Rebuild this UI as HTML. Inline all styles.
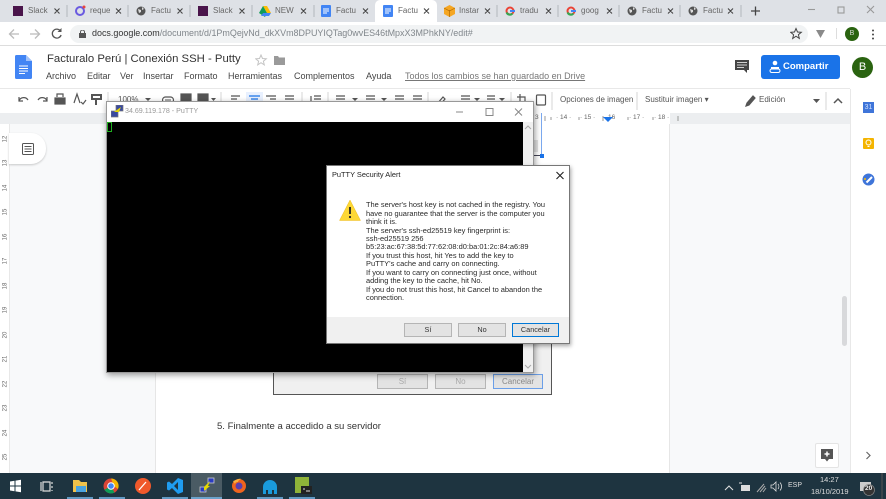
<!DOCTYPE html>
<html><head><meta charset="utf-8"><style>
html,body{margin:0;padding:0;width:886px;height:499px;overflow:hidden;background:#fff;font-family:"Liberation Sans",sans-serif}
div,span,svg{position:absolute;display:block}
#w{left:0;top:0;width:886px;height:499px;overflow:hidden;filter:blur(.35px)}
.t{white-space:nowrap;line-height:1}
.tab{top:7px;font-size:8px;color:#666;width:20px;overflow:hidden;white-space:nowrap;line-height:1}
.m{top:72px;font-size:9px;color:#444;white-space:nowrap;line-height:1}
.b{background:#e3e3e3;border:1px solid #b5b5b5;box-sizing:border-box;font-size:7.300px;color:#333;text-align:center;line-height:12px}
.d{left:366px;font-size:7.450px;color:#2a2a2a;white-space:nowrap;line-height:1}
.r{left:2px;font-size:6px;color:#666;transform:rotate(-90deg);white-space:nowrap;line-height:1}
.u{top:115px;font-size:6.500px;color:#666;white-space:nowrap;line-height:1}
</style></head><body><div id="w">
<!-- tab strip -->
<div style="left:0;top:0;width:886px;height:22px;background:#dee1e6"></div>
<div style="left:375px;top:0;width:62px;height:22px;background:#fff;border-radius:5px 5px 0 0"></div>
<!-- tab icons -->
<div style="left:13px;top:6px;width:10px;height:10px;background:#4a154b"></div>
<div style="left:198px;top:6px;width:10px;height:10px;background:#4a154b"></div>
<svg style="left:74px;top:5px" width="12" height="12"><circle cx="6" cy="6" r="4" fill="none" stroke="#6a5ae0" stroke-width="2"/><circle cx="10" cy="2" r="1.500" fill="#e8453c"/></svg>
<svg style="left:136px;top:6px" width="10" height="10"><circle cx="5" cy="5" r="4.500" fill="#555"/><path d="M2 3l3 1 0 2-2 1zM6 1l2 2-2 1z" fill="#ddd"/></svg>
<svg style="left:627px;top:6px" width="10" height="10"><circle cx="5" cy="5" r="4.500" fill="#555"/><path d="M2 3l3 1 0 2-2 1zM6 1l2 2-2 1z" fill="#ddd"/></svg>
<svg style="left:688px;top:6px" width="10" height="10"><circle cx="5" cy="5" r="4.500" fill="#555"/><path d="M2 3l3 1 0 2-2 1zM6 1l2 2-2 1z" fill="#ddd"/></svg>
<svg style="left:259px;top:6px" width="12" height="11"><path d="M4 0h4l4 7H8z" fill="#fbbc04"/><path d="M4 0l4 7-2 4-6-4z" fill="#0f9d58"/><path d="M2 10l2-3h8l-2 3z" fill="#4285f4"/></svg>
<svg style="left:321px;top:5px" width="10" height="12"><rect width="10" height="12" rx="1" fill="#4285f4"/><path d="M2 4h6M2 6h6M2 8h4" stroke="#fff"/></svg>
<svg style="left:383px;top:5px" width="10" height="12"><rect width="10" height="12" rx="1" fill="#4285f4"/><path d="M2 4h6M2 6h6M2 8h4" stroke="#fff"/></svg>
<svg style="left:444px;top:5px" width="11" height="12"><path d="M5.500 0L11 3v6l-5.500 3L0 9V3z" fill="#f5a623"/><path d="M5.500 5v7M0 3l5.500 3L11 3" stroke="#b26a00" fill="none" stroke-width=".7"/></svg>
<svg style="left:505px;top:6px" width="10" height="10"><circle cx="5" cy="5" r="3.500" fill="none" stroke="#ea4335" stroke-width="2"/><path d="M5 5h5" stroke="#4285f4" stroke-width="2"/><path d="M1.600 6.500A3.500 3.500 0 0 0 7.500 7.500" fill="none" stroke="#34a853" stroke-width="2"/></svg>
<svg style="left:566px;top:6px" width="10" height="10"><circle cx="5" cy="5" r="3.500" fill="none" stroke="#ea4335" stroke-width="2"/><path d="M5 5h5" stroke="#4285f4" stroke-width="2"/><path d="M1.600 6.500A3.500 3.500 0 0 0 7.500 7.500" fill="none" stroke="#34a853" stroke-width="2"/></svg>
<!-- tab text -->
<span class="tab" style="left:28px">Slack</span><span class="tab" style="left:90px">reque</span><span class="tab" style="left:151px">Factu</span><span class="tab" style="left:213px">Slack</span><span class="tab" style="left:275px">NEW</span><span class="tab" style="left:336px">Factu</span><span class="tab" style="left:398px">Factu</span><span class="tab" style="left:459px">Instar</span><span class="tab" style="left:520px">tradu</span><span class="tab" style="left:581px">goog</span><span class="tab" style="left:642px">Factu</span><span class="tab" style="left:703px">Factu</span>
<!-- closes -->
<svg style="left:0;top:0" width="886" height="22" stroke="#444" stroke-width="1.100" fill="none"><path d="M54.500 8.500l5 5m0-5l-5 5M116 8.500l5 5m0-5l-5 5M177.500 8.500l5 5m0-5l-5 5M239.500 8.500l5 5m0-5l-5 5M301 8.500l5 5m0-5l-5 5M363 8.500l5 5m0-5l-5 5M424 8.500l5 5m0-5l-5 5M485 8.500l5 5m0-5l-5 5M546 8.500l5 5m0-5l-5 5M607 8.500l5 5m0-5l-5 5M668 8.500l5 5m0-5l-5 5M728 8.500l5 5m0-5l-5 5"/><path d="M67 5v12M128 5v12M190 5v12M252 5v12M314 5v12M497 5v12M558 5v12M619 5v12M680 5v12M741 5v12" stroke="#a8adb2" stroke-width=".8"/><path d="M751 11h9M755.500 6.500v9" stroke="#444" stroke-width="1.300"/><path d="M808 9.500h7" stroke="#999"/><rect x="838" y="7" width="6" height="6" stroke="#999"/><path d="M867 6l7 7m0-7l-7 7" stroke="#999"/></svg>
<!-- omnibox -->
<div style="left:0;top:22px;width:886px;height:23px;background:#fff;border-bottom:1px solid #ddd"></div>
<div style="left:70px;top:25px;width:738px;height:18px;background:#f1f3f4;border-radius:9px"></div>
<svg style="left:8px;top:26px" width="56" height="16" fill="none"><path d="M11 8H2M6 3.500L1.500 8 6 12.500" stroke="#bbb" stroke-width="1.300"/><path d="M22 8h9M27 3.500L31.500 8 27 12.500" stroke="#bbb" stroke-width="1.300"/><path d="M52.500 5a4.500 4.500 0 1 0 .6 4" stroke="#555" stroke-width="1.300"/><path d="M53.500 2v4h-4z" fill="#555"/></svg>
<svg style="left:79px;top:30px" width="7" height="8"><rect y="3" width="7" height="5" fill="#555"/><path d="M1.500 3.500V2a2 2 0 0 1 4 0v1.500" fill="none" stroke="#555"/></svg>
<div class="t" style="left:92px;top:29px;font-size:8.960px;color:#80868b"><span style="position:static;display:inline;color:#333">docs.google.com</span>/document/d/1PmQejvNd_dkXVm8DPUYIQTag0wvES46tMpxX3MPhkNY/edit#</div>
<svg style="left:790px;top:27px" width="46" height="14"><path d="M6 1.500l1.500 3.500 3.800.3-2.900 2.400.9 3.700L6 9.200 2.700 11.500l.9-3.700L.7 5.300l3.800-.3z" fill="none" stroke="#444" stroke-width="1"/><path d="M26 3h9l-4.500 8z" fill="#8a8a8a"/></svg>
<div style="left:836px;top:28px;width:1px;height:11px;background:#ddd"></div>
<div style="left:845px;top:27px;width:14px;height:14px;border-radius:7px;background:#2a6310;color:#ddd;font-size:7px;line-height:14px;text-align:center">B</div>
<svg style="left:871px;top:29px" width="4" height="11" fill="#444"><circle cx="2" cy="1.500" r="1"/><circle cx="2" cy="5.500" r="1"/><circle cx="2" cy="9.500" r="1"/></svg>
<!-- docs header -->
<svg style="left:15px;top:55px" width="17" height="24"><path d="M1.500 0H11l6 6v16.500a1.500 1.500 0 0 1-1.500 1.500h-14A1.500 1.500 0 0 1 0 22.500v-21A1.500 1.500 0 0 1 1.500 0z" fill="#4285f4"/><path d="M11 0l6 6h-6z" fill="#a1c2fa"/><path d="M4 11h9M4 13.500h9M4 16h9M4 18.500h6" stroke="#fff"/></svg>
<div class="t" style="left:47px;top:54px;font-size:11.340px;color:#333">Facturalo Perú | Conexión SSH - Putty</div>
<svg style="left:255px;top:54px" width="50" height="13"><path d="M6 1l1.500 3.500 3.800.3-2.900 2.400.9 3.700L6 8.700 2.700 10.900l.9-3.700L.7 4.800l3.800-.3z" fill="none" stroke="#c4c4c4"/><path d="M19 2h4l1 1.500h6v7.500H19z" fill="#9a9a9a"/></svg>
<span class="m" style="left:46px">Archivo</span><span class="m" style="left:87px">Editar</span><span class="m" style="left:120px">Ver</span><span class="m" style="left:143px">Insertar</span><span class="m" style="left:184px">Formato</span><span class="m" style="left:228px">Herramientas</span><span class="m" style="left:294px">Complementos</span><span class="m" style="left:366px">Ayuda</span>
<span class="m" style="left:405px;color:#777;text-decoration:underline">Todos los cambios se han guardado en Drive</span>
<svg style="left:735px;top:60px" width="14" height="13"><path d="M0 0h14v10h-2v3l-3-3H0z" fill="#444"/><path d="M2 2.500h10M2 5h10M2 7.500h7" stroke="#fff" stroke-width=".8"/></svg>
<div style="left:761px;top:55px;width:79px;height:24px;background:#1a73e8;border-radius:3px"></div>
<svg style="left:769px;top:60px" width="12" height="13" fill="#fff"><circle cx="6" cy="3" r="2.300"/><path d="M2 7h8v2H2z"/><rect x="1" y="9" width="10" height="3.500" rx="1.700" fill="none" stroke="#fff"/></svg>
<div class="t" style="left:783px;top:62px;font-size:9.500px;font-weight:bold;color:#fff">Compartir</div>
<div style="left:852px;top:57px;width:21px;height:21px;border-radius:50%;background:#2a6310;color:#fff;font-size:11px;line-height:21px;text-align:center">B</div>
<div style="left:0;top:88px;width:850px;height:1px;background:#e8e8e8"></div>
<!-- toolbar -->
<svg style="left:0;top:89px" width="850" height="24" fill="none" stroke="#555" stroke-width="1.200">
<path d="M19 12a5 5 0 0 1 9-1M19 8v4h4M47 12a5 5 0 0 0-9-1M47 8v4h-4"/>
<rect x="55" y="9" width="10" height="6" fill="#555"/><path d="M57 8V5h6v3" />
<path d="M74 14l3-9 3 9M81 13l2 2 3-4"/>
<path d="M92 6h9v4h-9zM96 10v6" stroke-width="2"/>
<path d="M108 3v18" stroke="#ddd"/>
<path d="M165 11h6" stroke-width="1"/><rect x="162.500" y="8" width="11" height="6" rx="3"/>
<rect x="181" y="5" width="10" height="11" fill="#555"/><rect x="198" y="5" width="10" height="11" fill="#555"/>
<path d="M145 9h6l-3 3zM211 9h5l-2.500 3zM352 9h6l-3 3zM381 9h6l-3 3zM474 9h6l-3 3zM499 9h6l-3 3z" fill="#555" stroke="none"/>
<path d="M221 3v18" stroke="#ddd"/>
<path d="M231 7h9M231 10h6M231 13h9M266 7h10M270 10h6M266 13h10M285 7h9M285 10h9M285 13h9"/>
<path d="M302 3v18M328 3v18M428 3v18" stroke="#ddd"/>
<path d="M311 7v8M314 7h7M314 10h7M314 13h7"/><path d="M336 7h9M336 10h9M336 13h9M366 7h9M366 10h9M366 13h9M395 7h9M395 10h9M395 13h9M413 7h9M413 10h9M413 13h9"/>
<path d="M437 15l6-7 2 2-6 7zM461 7h9M461 10h9M487 7h8M487 10h8" />
<path d="M511 3v18" stroke="#ddd"/>
<path d="M520 5v10h7M517 8h8v8"/><rect x="536.500" y="6" width="9" height="10" rx="1"/>
<path d="M552 3v18M637 3v18M826 3v18" stroke="#ddd"/>
<path d="M746 17l1-3 6-7 2 2-6 7z" fill="#555"/>
<path d="M834 14l4-4 4 4" stroke-width="1.500"/>
</svg>
<div style="left:246px;top:92px;width:17px;height:15px;background:#e8f0fe"></div>
<svg style="left:248px;top:94px" width="14" height="11"><path d="M1 2h11M3 5h7M1 8h11" stroke="#1a73e8" stroke-width="1.200"/></svg>
<div class="t" style="left:118px;top:96px;font-size:8px;color:#555">100%</div>
<div class="t" style="left:560px;top:96px;font-size:8px;color:#555">Opciones de imagen</div>
<div class="t" style="left:645px;top:96px;font-size:8px;color:#555">Sustituir imagen ▾</div>
<div class="t" style="left:759px;top:96px;font-size:8px;color:#555">Edición</div>
<svg style="left:813px;top:99px" width="7" height="4"><path d="M0 0h7L3.500 4z" fill="#555"/></svg>
<!-- doc canvas -->
<div style="left:0;top:113px;width:850px;height:360px;background:#f8f9fa"></div>
<div style="left:0;top:113px;width:850px;height:11px;background:#eceef0"></div>
<div style="left:155px;top:113px;width:515px;height:11px;background:#fff"></div>
<div style="left:155px;top:124px;width:515px;height:349px;background:#fff;border-left:1px solid #e6e6e6;border-right:1px solid #e6e6e6;box-sizing:border-box"></div>
<span class="u" style="left:535px">3</span><span class="u" style="left:556px">· 14 ·</span><span class="u" style="left:580px">· 15 ·</span><span class="u" style="left:604px">· 16</span><span class="u" style="left:629px">· 17 ·</span><span class="u" style="left:654px">· 18 ·</span>
<svg style="left:539px;top:116px" width="140" height="6" stroke="#999"><path d="M6 0v5M12 1v3M40 1v3M64 0v5M89 1v3M114 1v3M139 0v5"/></svg>
<svg style="left:603px;top:115px" width="10" height="7"><path d="M0 2h10L5 7z" fill="#1a73e8"/></svg>
<!-- left ruler -->
<div style="left:0;top:124px;width:9px;height:349px;background:#fff;border-right:1px solid #e8e8e8"></div>
<div class="r" style="top:136px">12</div><div class="r" style="top:160px">13</div><div class="r" style="top:185px">14</div><div class="r" style="top:209px">15</div><div class="r" style="top:234px">16</div><div class="r" style="top:258px">17</div><div class="r" style="top:283px">18</div><div class="r" style="top:307px">19</div><div class="r" style="top:332px">20</div><div class="r" style="top:356px">21</div><div class="r" style="top:381px">22</div><div class="r" style="top:405px">23</div><div class="r" style="top:430px">24</div><div class="r" style="top:454px">25</div>
<!-- outline button -->
<div style="left:9px;top:133px;width:37px;height:31px;background:#fff;border-radius:0 15px 15px 0;box-shadow:0 1px 2px rgba(0,0,0,.2)"></div>
<svg style="left:22px;top:143px" width="12" height="12" fill="none" stroke="#555"><rect x=".5" y=".5" width="11" height="11" rx="1"/><path d="M2.500 3.500h7M2.500 6h7M2.500 8.500h7"/></svg>
<!-- selection -->
<div style="left:541px;top:113px;width:1px;height:43px;background:#7baaf0"></div>
<div style="left:534px;top:140px;width:4px;height:12px;background:#e4e4e4"></div>
<div style="left:534px;top:155px;width:7px;height:1px;background:#445"></div>
<div style="left:540px;top:154px;width:4px;height:4px;background:#1a73e8"></div>
<!-- screenshot in doc -->
<div style="left:273px;top:344px;width:279px;height:51px;background:#f0f0f0;border-right:1px solid #555;border-bottom:1px solid #555;border-left:1px solid #555;box-sizing:border-box"></div>
<div class="b" style="left:377px;top:374px;width:51px;height:15px;color:#aaa;line-height:14px;font-size:8px">Sí</div>
<div class="b" style="left:435px;top:374px;width:51px;height:15px;color:#aaa;line-height:14px;font-size:8px">No</div>
<div class="b" style="left:493px;top:374px;width:50px;height:15px;border:1px solid #6b9fe8;color:#888;line-height:14px;font-size:8px">Cancelar</div>
<div class="t" style="left:217px;top:422px;font-size:9.550px;color:#333">5. Finalmente a accedido a su servidor</div>
<!-- scrollbar & side panel -->
<div style="left:842px;top:296px;width:5px;height:50px;background:#d8d9db;border-radius:3px"></div>
<div style="left:850px;top:89px;width:36px;height:384px;background:#fff;border-left:1px solid #e8e8e8;box-sizing:border-box"></div>
<div style="left:863px;top:102px;width:11px;height:11px;background:#3f75d9;color:#cfe0ff;font-size:7px;line-height:12px;text-align:center">31</div>
<div style="left:863px;top:138px;width:11px;height:11px;background:#f4b400;border-radius:1px"></div>
<svg style="left:865px;top:139px" width="7" height="9"><circle cx="3.500" cy="3.500" r="2.500" fill="none" stroke="#fff"/><path d="M2.500 7.500h2" stroke="#fff"/></svg>
<svg style="left:862px;top:173px" width="13" height="13"><circle cx="6.500" cy="6.500" r="6" fill="#3f75d9"/><path d="M4.500 9.500L10 4" stroke="#fff" stroke-width="2"/><circle cx="3" cy="6" r="1" fill="#fbbc04"/></svg>
<div style="left:815px;top:443px;width:24px;height:25px;background:#fff;border:1px solid #e4e4e4;border-radius:2px;box-sizing:border-box"></div>
<svg style="left:821px;top:449px" width="12" height="13"><path d="M0 0h12v10H8l-2 2.500L4 10H0z" fill="#555"/><path d="M6 2.500v5M3.500 5h5" stroke="#fff" stroke-width="1.500"/></svg>
<svg style="left:865px;top:451px" width="6" height="9"><path d="M1.500 1l3.500 3.500L1.500 8" fill="none" stroke="#666" stroke-width="1.200"/></svg>
<!-- PuTTY window -->
<div style="left:106px;top:101px;width:428px;height:272px;background:#fff;border:1px solid #999;box-sizing:border-box;box-shadow:1px 2px 6px rgba(0,0,0,.4)"></div>
<svg style="left:111px;top:105px" width="13" height="13"><rect x="5" y="0" width="7" height="6" fill="#3a4aa0" stroke="#777" stroke-width=".7"/><rect x="0" y="6" width="7" height="6" fill="#3a4aa0" stroke="#777" stroke-width=".7"/><path d="M3 7l7-5-2 5 2 0" fill="#e6d800"/></svg>
<div class="t" style="left:125px;top:108px;font-size:7.100px;color:#999">34.69.119.178 - PuTTY</div>
<svg style="left:453px;top:105px" width="72" height="14" fill="none" stroke="#888"><path d="M3 7h7"/><rect x="33" y="3.500" width="7" height="7"/><path d="M62 3.500l7 7m0-7l-7 7"/></svg>
<div style="left:107px;top:122px;width:416px;height:250px;background:#000"></div>
<div style="left:107px;top:122px;width:5px;height:10px;border:1.500px solid #1fae1f;box-sizing:border-box"></div>
<div style="left:523px;top:122px;width:10px;height:250px;background:#f0f0f0"></div>
<svg style="left:524px;top:124px" width="8" height="6"><path d="M1 5l3-3 3 3" fill="none" stroke="#aaa"/></svg>
<svg style="left:524px;top:364px" width="8" height="6"><path d="M1 1l3 3 3-3" fill="none" stroke="#aaa"/></svg>
<!-- Alert dialog -->
<div style="left:326px;top:165px;width:244px;height:179px;background:#fff;border:1px solid #777;box-sizing:border-box;box-shadow:1px 2px 4px rgba(0,0,0,.35)"></div>
<div class="t" style="left:332px;top:171px;font-size:7.400px;color:#222">PuTTY Security Alert</div>
<svg style="left:556px;top:171px" width="8" height="9"><path d="M.5 1l7 7m0-7l-7 7" stroke="#222" stroke-width="1.100"/></svg>
<svg style="left:339px;top:199px" width="22" height="22"><path d="M11 1L21.500 21.500H.5z" fill="#fdd835" stroke="#eebb22" stroke-width=".5"/><path d="M11 8v7" stroke="#222" stroke-width="1.800"/><circle cx="11" cy="18" r="1.100" fill="#222"/></svg>
<div class="d" style="top:201px">The server's host key is not cached in the registry. You</div>
<div class="d" style="top:210px">have no guarantee that the server is the computer you</div>
<div class="d" style="top:218px">think it is.</div>
<div class="d" style="top:227px">The server's ssh-ed25519 key fingerprint is:</div>
<div class="d" style="top:235px">ssh-ed25519 256</div>
<div class="d" style="top:243px">b5:23:ac:67:38:5d:77:62:08:d0:ba:01:2c:84:a6:89</div>
<div class="d" style="top:252px">If you trust this host, hit Yes to add the key to</div>
<div class="d" style="top:260px">PuTTY's cache and carry on connecting.</div>
<div class="d" style="top:269px">If you want to carry on connecting just once, without</div>
<div class="d" style="top:277px">adding the key to the cache, hit No.</div>
<div class="d" style="top:286px">If you do not trust this host, hit Cancel to abandon the</div>
<div class="d" style="top:294px">connection.</div>
<div style="left:327px;top:317px;width:242px;height:26px;background:#f0f0f0"></div>
<div class="b" style="left:404px;top:323px;width:48px;height:14px">Sí</div>
<div class="b" style="left:458px;top:323px;width:48px;height:14px">No</div>
<div class="b" style="left:512px;top:323px;width:47px;height:14px;border:1px solid #0078d7">Cancelar</div>
<!-- Taskbar -->
<div style="left:0;top:473px;width:886px;height:26px;background:#1e3440"></div>
<div style="left:191px;top:473px;width:31px;height:26px;background:#4a5b64"></div>
<svg style="left:0;top:473px" width="886" height="26">
<path d="M67 25h26M99 25h26M162 25h26M191 25h31M257 25h26M289 25h26" stroke="#76b9ed" stroke-width="1.500"/>
<path d="M10 8.500l4.500-.7V12.500H10zM15.500 7.600l5.500-.9V12.500H15.500zM10 13.500h4.500v4.700L10 17.500zM15.500 13.500H21v5.800l-5.500-.9z" fill="#fff"/>
<path d="M43 9h7v9h-7zM41 9v9M52 9v2M52 13v2M52 17v1" stroke="#ddd" fill="none" stroke-width="1.200"/>
<path d="M73 7h6l2 2h6v10H73z" fill="#f0c24a"/><rect x="76" y="13" width="10" height="6" fill="#4aa3df"/>
<circle cx="111" cy="13" r="7.500" fill="#db4437"/><path d="M111 13L104.500 16.700A7.500 7.500 0 0 0 114.500 19.600z" fill="#0f9d58"/><path d="M111 5.500A7.500 7.500 0 0 1 118 16l-4-3z" fill="#f4b400"/><circle cx="111" cy="13" r="3.300" fill="#4285f4" stroke="#fff"/>
<circle cx="143" cy="13" r="8" fill="#f0592b"/><path d="M139 17l7-8" stroke="#fff" stroke-width="1.300"/>
<path d="M178 5l5 2v12l-5 2-6-6-3 2.500-2-1v-7l2-1 3 2.500zM178 9l-4 4 4 4z" fill="#1f9cf0"/>
<rect x="208" y="5" width="6" height="5" fill="#2a3cc0" stroke="#ccc" stroke-width=".8"/><rect x="200" y="14" width="6" height="5" fill="#2a3cc0" stroke="#ccc" stroke-width=".8"/><path d="M204 14l6-6-2 5 2 0-6 5z" fill="#e6d800"/>
<circle cx="239" cy="13" r="7" fill="#f0641e"/><circle cx="239" cy="13" r="3.500" fill="#5a3fb0"/><path d="M233 8c2 0 5-3 8-2-2 1-3 2-3 3-2 0-3 1-3 2z" fill="#fbb03b"/>
<path d="M263 21v-7a7 7 0 0 1 14 0v7h-3v-4h-2v4h-4v-4h-2v4z" fill="#1a9bdc"/>
<rect x="295" y="4" width="14" height="16" fill="#8fb339"/><rect x="301" y="13" width="11" height="8" fill="#222"/><path d="M303 16h2M306 18h4" stroke="#ddd"/>
<path d="M725 17l4-4 4 4" fill="none" stroke="#ddd" stroke-width="1.100"/>
<rect x="741" y="12" width="9" height="6" fill="#ddd"/><path d="M739 10h3" stroke="#ddd"/>
<path d="M757 19l7-8M760 19l5-6M763 19l3-4" stroke="#aaa" fill="none"/>
<path d="M771 12h2l3-3v9l-3-3h-2zM778 11a4 4 0 0 1 0 5M780 9.500a6 6 0 0 1 0 8" stroke="#ddd" fill="none" stroke-width=".8"/>
<rect x="860" y="9" width="11" height="9" fill="#ccc"/><circle cx="869" cy="17" r="5.500" fill="#333" stroke="#888" stroke-width=".7"/>
<path d="M882 0v26" stroke="#555"/>
</svg>
<div class="t" style="left:788px;top:482px;font-size:7px;color:#ddd">ESP</div>
<div class="t" style="left:820px;top:476px;font-size:7.500px;color:#ddd">14:27</div>
<div class="t" style="left:811px;top:488px;font-size:7.500px;color:#ddd">18/10/2019</div>
<div class="t" style="left:865px;top:486px;font-size:6.500px;font-weight:bold;color:#eee">20</div>
</div></body></html>
